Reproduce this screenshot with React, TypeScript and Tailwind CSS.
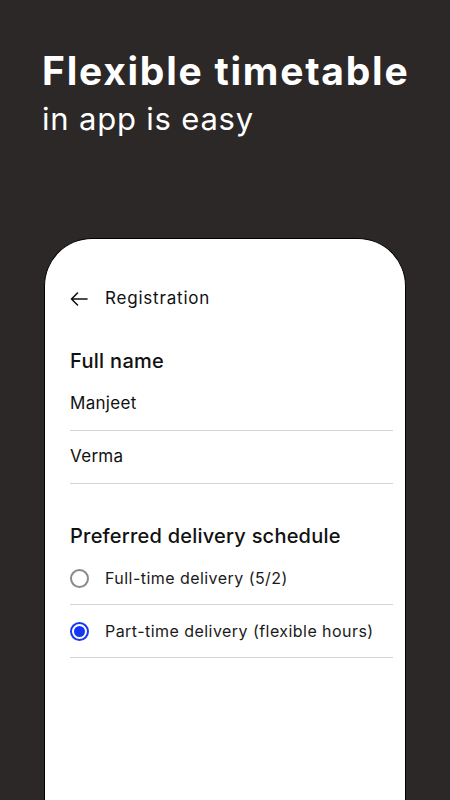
import React from 'react';

const font = { fontFamily: 'Inter, "Noto Sans", sans-serif' };

function Radio({ checked, label }: { checked?: boolean; label: string }) {
  return (
    <div className="flex items-center h-[53px] border-b border-[#d4d4d4]">
      <div className="w-[35px] flex">
        {checked ? (
          <div className="w-[19px] h-[19px] rounded-full border-2 border-[#1536f5] flex items-center justify-center">
            <div className="w-[11px] h-[11px] rounded-full bg-[#1536f5]" />
          </div>
        ) : (
          <div className="w-[19px] h-[19px] rounded-full border-2 border-[#8a8a8a]" />
        )}
      </div>
      <span className="text-[16px] tracking-[0.45px] text-[#1a1a1a]">{label}</span>
    </div>
  );
}

function Field({ value }: { value: string }) {
  return (
    <div className="h-[53px] flex items-center border-b border-[#d4d4d4]">
      <span className="text-[17px] tracking-[0.3px] text-[#111]">{value}</span>
    </div>
  );
}

export default function App() {
  return (
    <div className="w-[450px] h-[800px] bg-[#2b2827] flex flex-col overflow-hidden" style={font}>
      <div className="pl-[42px] pt-[48px] text-white">
        <h1 className="text-[39px] font-bold leading-[46px] tracking-[1.75px]">Flexible timetable</h1>
        <p className="mt-[5px] text-[31px] leading-[40px] font-normal tracking-[0.8px]">in app is easy</p>
      </div>

      <div className="mt-[99px] ml-[44px] w-[362px] flex-1 bg-white rounded-t-[48px] border border-b-0 border-black">
        <div className="pl-[25px] pr-[12px] pt-[48px]">
          <div className="flex items-center h-[24px]">
            <svg width="18" height="14" viewBox="0 0 18 14" className="mr-[17px]">
              <path d="M17 7H1.5M7.5 1L1.5 7l6 6" fill="none" stroke="#111" strokeWidth="1.6" strokeLinecap="round" strokeLinejoin="round" />
            </svg>
            <span className="text-[17px] tracking-[0.8px] text-[#111]">Registration</span>
          </div>

          <h2 className="mt-[37px] text-[20px] font-medium tracking-[0.3px] text-[#111] leading-[26px]">Full name</h2>
          <div className="mt-[4px]">
            <Field value="Manjeet" />
            <Field value="Verma" />
          </div>

          <h2 className="mt-[39px] text-[20px] font-medium tracking-[0.22px] text-[#111] leading-[26px]">Preferred delivery schedule</h2>
          <div className="mt-[3px]">
            <Radio label="Full-time delivery (5/2)" />
            <Radio checked label="Part-time delivery (flexible hours)" />
          </div>
        </div>
      </div>
    </div>
  );
}
